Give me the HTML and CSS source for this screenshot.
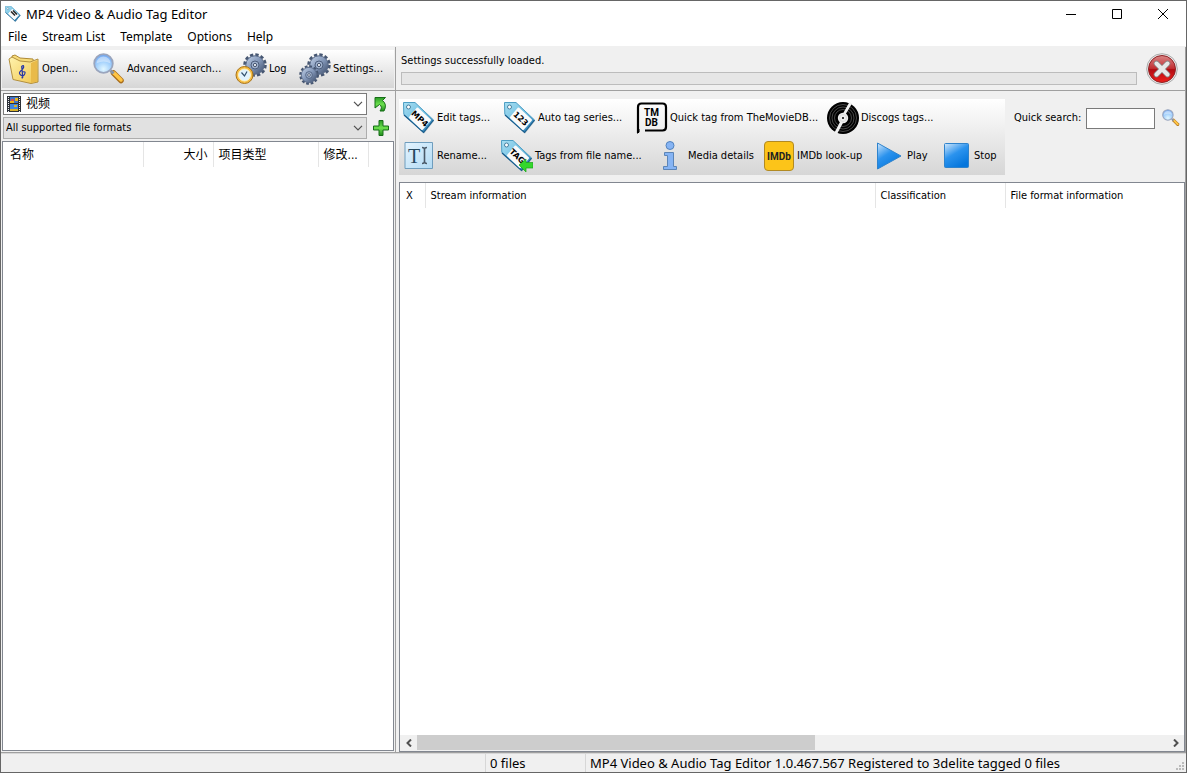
FILE: index.html
```html
<!DOCTYPE html>
<html lang="en">
<head>
<meta charset="utf-8">
<title>MP4 Video &amp; Audio Tag Editor</title>
<link rel="stylesheet" href="styles.css">
</head>
<body>
<svg class="defs" aria-hidden="true">
  <defs>
    <linearGradient id="tagBlue" x1="0" y1="0" x2="1" y2="1"><stop offset="0" stop-color="#a9dff2"/><stop offset=".5" stop-color="#6fbfe2"/><stop offset="1" stop-color="#1d6ea8"/></linearGradient>
    <linearGradient id="folder" x1="0" y1="0" x2="1" y2="1"><stop offset="0" stop-color="#fff3ae"/><stop offset="1" stop-color="#f0c650"/></linearGradient>
    <radialGradient id="lens" cx=".5" cy=".8" r=".8"><stop offset="0" stop-color="#e2f7ff"/><stop offset=".5" stop-color="#a5d2fc"/><stop offset="1" stop-color="#6aa2f0"/></radialGradient>
    <linearGradient id="steel" x1="0" y1="0" x2="1" y2="1"><stop offset="0" stop-color="#c3d2e8"/><stop offset=".5" stop-color="#8397b8"/><stop offset="1" stop-color="#3c4c69"/></linearGradient>
    <linearGradient id="green" x1="0" y1="0" x2="0" y2="1"><stop offset="0" stop-color="#2b9c26"/><stop offset=".5" stop-color="#6ce04e"/><stop offset="1" stop-color="#1f8a1c"/></linearGradient>
    <linearGradient id="blue" x1="0" y1="0" x2=".6" y2="1"><stop offset="0" stop-color="#d3e8fb"/><stop offset=".5" stop-color="#2b93ee"/><stop offset="1" stop-color="#0576dc"/></linearGradient>
    <linearGradient id="red" x1="0" y1="0" x2="0" y2="1"><stop offset="0" stop-color="#d98686"/><stop offset=".48" stop-color="#c22f33"/><stop offset=".5" stop-color="#b00d13"/><stop offset="1" stop-color="#f0201c"/></linearGradient>
    <linearGradient id="pale" x1="0" y1="0" x2="1" y2="1"><stop offset="0" stop-color="#e4f4ff"/><stop offset="1" stop-color="#b2daf3"/></linearGradient>
    <symbol id="tag" viewBox="0 0 32 32">
      <path d="M.5 1.500H12L31 19 21 31.500 1.500 13.500Z" fill="#456f86" opacity=".5"/>
      <path d="M.5.5H12L30.500 18 20.500 30.500.8 12.500Z" fill="url(#tagBlue)" stroke="#4d9ec4" stroke-linejoin="round"/>
      <path d="m1 13 19.500 17.500L30.500 18" fill="none" stroke="#1b5c8c" stroke-width="1.200"/>
      <circle cx="5.500" cy="5" r="2" fill="#fff" stroke="#477f9e"/>
      <path d="M14.500 6.500 27 18 19 27 7 15.500Z" fill="#fafafa" stroke="#fafafa" stroke-width="2" stroke-linejoin="round"/>
    </symbol>
    <symbol id="glass" viewBox="0 0 32 32">
      <path d="m20.500 20 7.500 7.500" stroke="#a86d1c" stroke-width="5.500" stroke-linecap="round"/>
      <path d="m21 20 7 7" stroke="#ffc544" stroke-width="3.500" stroke-linecap="round"/>
      <path d="m17.500 17.500 3 3" stroke="#8893a5" stroke-width="3"/>
      <circle cx="10.500" cy="10.500" r="9.300" fill="url(#lens)" stroke="#9aa5bd" stroke-width="1.800"/>
      <path d="M3.500 10.500a7 7 0 0 1 14 0q-7-4-14 0Z" fill="#fff" opacity=".4"/>
    </symbol>
    <symbol id="gear" viewBox="0 0 24 24">
      <circle cx="12" cy="12" r="10" fill="none" stroke="#475772" stroke-width="3.500" stroke-dasharray="3.200 2.036"/>
      <circle cx="12" cy="12" r="9.200" fill="url(#steel)" stroke="#5a6b89"/>
      <circle cx="12" cy="12" r="4" fill="#9eb0cc" stroke="#4d5e7c"/>
      <circle cx="12" cy="12" r="1.600" fill="#f2f5f9" stroke="#45536d"/>
    </symbol>
    <symbol id="chevron" viewBox="0 0 10 6"><path d="m1 .8 4 4 4-4" fill="none" stroke="#505050" stroke-width="1.200"/></symbol>
  </defs>
</svg>

<div class="window">
  <header class="titlebar">
    <svg class="app-icon" viewBox="0 0 32 32"><use href="#tag"/><path d="m12 11 8 8m-4-10 8 8" stroke="#222" stroke-width="3"/></svg>
    <h1 class="title">MP4 Video &amp; Audio Tag Editor</h1>
    <div class="window-buttons">
      <button class="window-button" aria-label="Minimize"><svg viewBox="0 0 12 12"><path d="M1 6.500h10"/></svg></button>
      <button class="window-button" aria-label="Maximize"><svg viewBox="0 0 12 12"><path d="M1.500 1.500h9v9h-9z"/></svg></button>
      <button class="window-button" aria-label="Close"><svg viewBox="0 0 12 12"><path d="m1 1 10 10M11 1 1 11"/></svg></button>
    </div>
  </header>
  <nav class="menubar">
    <button>File</button><button>Stream List</button><button>Template</button><button>Options</button><button>Help</button>
  </nav>

  <main class="panes">
    <section class="left-pane">
      <div class="top-band">
        <div class="toolbar main-toolbar">
          <button class="tool tool-open">
            <svg viewBox="0 0 32 32"><path d="M4 3 7 2l5 3 13 1 1 6-2 14-17-4Z" fill="#f7dc7a" stroke="#b08a35"/><path d="M1 6 4 4l8 4 10 1 8-3v23l-7 1.500-18-4Z" fill="url(#folder)" stroke="#b3903f"/><path d="m23 10 6-2.500v21l-6 1.500Z" fill="#e9ba49"/><path d="M13.500 24.500q1.500 1 1.200-1l-1-10q2-2 2 .5-.5 2-3 4t0 4 4-1-2.500-2" fill="none" stroke="#2434a8" stroke-width="1.200"/></svg>
            Open...
          </button>
          <button class="tool tool-advanced"><svg viewBox="0 0 32 32"><use href="#glass"/></svg>Advanced search...</button>
          <button class="tool tool-log">
            <svg viewBox="0 0 32 32"><use href="#gear" x="8" y="0" width="24" height="24"/><circle cx="9.500" cy="22" r="8.500" fill="#f6bd43" stroke="#a8741b"/><circle cx="9.500" cy="22" r="6" fill="#e1f3fd" stroke="#fff4c4"/><path d="M6.500 19.500 9.500 23l2.500-4.500" fill="none" stroke="#31506c" stroke-width="1.200"/></svg>
            Log
          </button>
          <button class="tool"><svg viewBox="0 0 32 32"><use href="#gear" x="8" y="0" width="24" height="24"/><use href="#gear" x="0" y="12" width="20" height="20"/></svg>Settings...</button>
        </div>
      </div>
      <div class="filters">
        <div class="combo combo-folder">
          <svg class="film" viewBox="0 0 14 16"><path d="M0 0h14v16H0z" fill="#2d3138"/><path d="M3 1h8v6H3z" fill="#3f76c8"/><path d="M3 8h8v7H3z" fill="#3f86df"/><path d="M3 5h4v2H3zm5-3h3v3H8z" fill="#e8b51f"/><path d="M4 3h3v2H4z" fill="#d34d55"/><path d="M3 13h8v2H3zm4-4h3v2H7z" fill="#d8b22b"/><path d="M1.500 1v15M12.500 1v15" stroke="#eee" stroke-dasharray="1 1"/></svg>
          <select aria-label="Folder"><option>视频</option></select>
          <svg class="chevron"><use href="#chevron"/></svg>
        </div>
        <button class="filter-button" aria-label="Up one level"><svg viewBox="0 0 16 16"><path d="M2 1.500h10.500l-3 3q5 4 1.500 10.500H7q3-4-.5-6.500L2 12Z" fill="url(#green)" stroke="#176e18"/></svg></button>
        <div class="combo combo-format">
          <select aria-label="File formats"><option>All supported file formats</option></select>
          <svg class="chevron"><use href="#chevron"/></svg>
        </div>
        <button class="filter-button" aria-label="Add"><svg viewBox="0 0 16 16"><path d="M6 .5h4V6h5.500v4H10v5.500H6V10H.5V6H6Z" fill="url(#green)" stroke="#176e18"/></svg></button>
      </div>
      <div class="file-list">
        <table>
          <colgroup><col class="col-name"><col class="col-size"><col class="col-type"><col class="col-date"><col></colgroup>
          <thead><tr><th>名称</th><th class="numeric">大小</th><th>项目类型</th><th>修改...</th><td></td></tr></thead>
        </table>
      </div>
    </section>

    <section class="right-pane">
      <div class="top-band status-band">
        <div class="progress-area">
          <label for="progress">Settings successfully loaded.</label>
          <progress id="progress" value="0" max="100"></progress>
        </div>
        <button class="cancel" aria-label="Cancel"><svg viewBox="0 0 32 32"><circle cx="16" cy="16" r="15.300" fill="#ececec" stroke="#aaa"/><circle cx="16" cy="16" r="13.500" fill="url(#red)" stroke="#8d2225"/><path d="m10.500 10.500 11 11m0-11-11 11" stroke="#888" stroke-width="5.500" stroke-linecap="round"/><path d="m10.500 10.500 11 11m0-11-11 11" stroke="#e8e8e8" stroke-width="4" stroke-linecap="round"/></svg></button>
      </div>
      <div class="actions">
        <div class="toolbar tag-toolbar">
          <div class="tool-row">
            <button class="tool tool-edit"><svg viewBox="0 0 32 32"><use href="#tag"/><text class="tag-text" transform="translate(17 16.500) rotate(43)" y="3">MP4</text></svg>Edit tags...</button>
            <button class="tool tool-series"><svg viewBox="0 0 32 32"><use href="#tag"/><text class="tag-text" transform="translate(17 16.500) rotate(43)" y="3">123</text></svg>Auto tag series...</button>
            <button class="tool tool-moviedb"><svg viewBox="0 0 32 32"><path d="M2 31V5q0-3.500 3.500-3.500h21Q30 1.500 30 5v20q0 3.500-3.500 3.500H9" fill="none" stroke="#000" stroke-width="2.200"/><path d="M1 32v-5h2.500v2.500Z"/><text class="db-text" x="15.500" y="13.500">TM</text><text class="db-text" x="15.500" y="24">DB</text></svg>Quick tag from TheMovieDB...</button>
            <button class="tool"><svg viewBox="0 0 32 32"><circle cx="16" cy="16" r="16"/><g fill="none" stroke="#777" stroke-width=".6"><circle cx="16" cy="16" r="13.500"/><circle cx="16" cy="16" r="11"/><circle cx="16" cy="16" r="8.500"/></g><path d="m22.500 0 2.500 1.500L18.500 12.500 16 11.500ZM7.500 30.500l2.500 1.500L16.500 20l-3-1Z" fill="#f1f1f1"/><circle cx="16" cy="16" r="5.200" fill="#eee"/><circle cx="16" cy="16" r="3.500" fill="none" stroke="#ccc" stroke-width=".6"/><circle cx="16" cy="16" r="1"/></svg>Discogs tags...</button>
          </div>
          <div class="tool-row">
            <button class="tool tool-rename"><svg viewBox="0 0 32 32"><path d="M2 2.500h27.500v26H2z" fill="url(#pale)" stroke="#6f9dbd"/><text class="rename-text" x="5" y="22.500">T</text><path d="M19 7.500q2.500 0 2.500 2 0-2 2.500-2m-5 16q2.500 0 2.500-2 0 2 2.500 2m-2.500-14v12" fill="none" stroke="#4a5968" stroke-width="1.600"/></svg>Rename...</button>
            <button class="tool tool-file"><svg viewBox="0 0 32 32"><use href="#tag"/><text class="tag-text" transform="translate(16.500 16) rotate(43)" y="3">TAG</text><path d="m18 25 7-6v3.500h7V28h-7v4Z" fill="#34d72b" stroke="#1ba01b" stroke-width=".7"/></svg>Tags from file name...</button>
            <button class="tool tool-media"><svg viewBox="0 0 32 32"><circle cx="16" cy="5.500" r="4" fill="#86b4f4" stroke="#5282bd"/><path d="M10.500 12.500h9v14h3v3h-13v-3h4v-11h-3Z" fill="#86b4f4" stroke="#5c85b7"/></svg>Media details</button>
            <button class="tool tool-imdb"><svg viewBox="0 0 32 32"><rect x="1.500" y="1.500" width="29" height="29" rx="3.500" fill="#fcc419" stroke="#b28a22"/><text class="imdb-text" x="16" y="20">IMDb</text></svg>IMDb look-up</button>
            <button class="tool tool-play"><svg viewBox="0 0 32 32"><path d="M4.500 3v26L28 16Z" fill="url(#blue)" stroke="#2e83cd"/></svg>Play</button>
            <button class="tool"><svg viewBox="0 0 32 32"><rect x="4.500" y="3.500" width="24" height="24" rx="1" fill="url(#blue)" stroke="#2e83cd"/></svg>Stop</button>
          </div>
        </div>
        <form class="search">
          <label for="search">Quick search:</label>
          <input id="search" type="text">
          <button type="button" aria-label="Search"><svg viewBox="0 0 32 32"><use href="#glass"/></svg></button>
        </form>
      </div>
      <div class="stream-list">
        <table>
          <colgroup><col class="col-mark"><col class="col-stream"><col class="col-class"><col></colgroup>
          <thead><tr><th>X</th><th>Stream information</th><th>Classification</th><th>File format information</th></tr></thead>
        </table>
        <div class="scrollbar">
          <button aria-label="Scroll left"><svg viewBox="0 0 8 8"><path d="M6 .5 2.500 4 6 7.500"/></svg></button>
          <div class="track"><div class="thumb"></div></div>
          <button aria-label="Scroll right"><svg viewBox="0 0 8 8"><path d="M2 .5 5.500 4 2 7.500"/></svg></button>
        </div>
      </div>
    </section>
  </main>

  <footer class="statusbar">
    <span class="status-main"></span>
    <span class="status-files">0 files</span>
    <span class="status-version">MP4 Video &amp; Audio Tag Editor 1.0.467.567 Registered to 3delite tagged 0 files</span>
    <svg class="grip" viewBox="0 0 9 9"><path d="M6 0h2v2H6zM3 3h2v2H3zm3 0h2v2H6zM0 6h2v2H0zm3 0h2v2H3zm3 0h2v2H6z" fill="#bbb"/></svg>
  </footer>
</div>
</body>
</html>
```
FILE: styles.css
```css
* { box-sizing: border-box; }
body { margin: 0; color: #000; font: 11px/16px "DejaVu Sans Condensed", "Noto Sans", "Noto Sans CJK SC", sans-serif; }
button { padding: 0; border: 0; background: none; color: inherit; font: inherit; white-space: nowrap; }
svg { display: block; flex: none; }
.defs { position: absolute; width: 0; height: 0; }

.window { display: flex; flex-direction: column; height: 100vh; border: 1px solid #666; background: #f0f0f0; }
.titlebar, .menubar, .statusbar { font-family: "Noto Sans", "Noto Sans CJK SC", sans-serif; }
.titlebar { display: flex; align-items: center; height: 26px; padding-left: 4px; background: #fff; }
.app-icon { width: 16px; height: 16px; }
.title { flex: 1; margin: 0 0 0 5px; font-size: 13px; font-weight: 400; line-height: 20px; }
.window-buttons { display: flex; }
.window-button { display: flex; align-items: center; justify-content: center; width: 46px; height: 24px; }
.window-button svg { width: 12px; height: 12px; fill: none; stroke: #000; }
.menubar { display: flex; gap: 15px; height: 20px; padding-left: 7px; background: #fff; border-bottom: 1px solid #f0f0f0; font-size: 12px; line-height: 20px; }

.panes { display: grid; grid-template-columns: 395px minmax(0, 1fr); flex: 1; min-height: 0; }
.left-pane, .right-pane { display: flex; flex-direction: column; min-width: 0; min-height: 0; border-right: 1px solid #a0a0a0; border-bottom: 1px solid #a0a0a0; }
.top-band { height: 44px; padding: 3px 1px; border-bottom: 1px solid #a0a0a0; }
.toolbar { background: linear-gradient(#fff, #d6d6d6); }
.main-toolbar { display: flex; align-items: center; height: 38px; padding-left: 6px; }
.tool { display: flex; align-items: center; gap: 2px; height: 38px; }
.tool svg { width: 32px; height: 32px; }
.tool-open { width: 85px; }
.tool-advanced { width: 142px; }
.tool-log { width: 64px; }
.tool-edit { width: 101px; }
.tool-series { width: 132px; }
.tool-moviedb { width: 191px; }
.tool-rename { width: 98px; }
.tool-file { width: 153px; }
.tool-media { width: 109px; }
.tool-imdb { width: 110px; }
.tool-play { width: 67px; }

.filters { display: grid; grid-template-columns: 1fr 16px; gap: 2px 6px; align-items: center; padding: 2px 6px 2px 2px; }
.combo { position: relative; display: flex; height: 22px; }
.combo select { flex: 1; appearance: none; padding: 0 20px 0 2px; border: 1px solid #adadad; border-radius: 0; background: #e1e1e1; color: #000; font: inherit; }
.combo-folder select { padding-left: 22px; border-color: #7a7a7a; background: #fff; font-size: 12px; }
.film { position: absolute; left: 4px; top: 3px; width: 14px; height: 16px; }
.chevron { position: absolute; right: 4px; top: 8px; width: 10px; height: 6px; pointer-events: none; }
.filter-button svg { width: 16px; height: 16px; }

.file-list, .stream-list { flex: 1; min-height: 0; border: 1px solid #828790; background: #fff; }
.file-list { margin: 0 1px 1px; }
table { width: 100%; border-collapse: collapse; table-layout: fixed; }
th { height: 25px; padding: 0 5px; border-right: 1px solid #e5e5e5; font-weight: 400; text-align: left; white-space: nowrap; }
th:last-child { border-right: 0; }
.file-list th { font-size: 12px; }
.file-list th:first-child { padding-left: 7px; }
.file-list .numeric { text-align: right; }
.col-name { width: 140px; }
.col-size { width: 70px; }
.col-type { width: 105px; }
.col-date { width: 50px; }
.col-mark { width: 25px; }
.col-stream { width: 450px; }
.col-class { width: 130px; }

.status-band { display: flex; align-items: center; gap: 9px; padding: 3px 7px 2px 5px; }
.progress-area { flex: 1; display: grid; gap: 3px; }
progress { appearance: none; width: 100%; height: 13px; border: 1px solid #bcbcbc; background: #e6e6e6; }
progress::-webkit-progress-bar { background: #e6e6e6; }
.cancel svg { width: 32px; height: 32px; }
.actions { display: flex; align-items: flex-start; gap: 9px; padding: 8px 5px 7px 3px; }
.tag-toolbar { flex: none; width: 606px; padding-left: 4px; }
.tool-row { display: flex; }
.search { display: flex; flex: 1; min-width: 0; align-items: center; gap: 5px; height: 38px; white-space: nowrap; }
.search input { flex: 1; min-width: 0; height: 21px; border: 1px solid #7a7a7a; background: #fff; font: inherit; }
.search button { margin-left: 2px; }
.search svg { width: 18px; height: 18px; }
.stream-list { display: flex; flex-direction: column; justify-content: space-between; margin-left: 3px; }
.stream-list th:first-child { padding-left: 6px; }
.scrollbar { display: grid; grid-template-columns: 17px 1fr 17px; height: 16px; background: #f0f0f0; }
.scrollbar button { display: flex; align-items: center; justify-content: center; }
.scrollbar svg { width: 8px; height: 8px; fill: none; stroke: #505050; stroke-width: 2; }
.thumb { width: 53%; height: 15px; background: #cdcdcd; }

.statusbar { display: flex; height: 19px; border-top: 1px solid #d7d7d7; font-size: 13px; line-height: 19px; }
.status-main { width: 485px; border-right: 1px solid #d7d7d7; }
.status-files { width: 100px; padding-left: 4px; border-right: 1px solid #d7d7d7; }
.status-version { flex: 1; padding-left: 4px; }
.grip { align-self: flex-end; width: 9px; height: 9px; margin: 1px; }

.tag-text { font: bold 8px "DejaVu Sans", sans-serif; text-anchor: middle; }
.db-text { font: bold 10px "Roboto", sans-serif; text-anchor: middle; }
.rename-text { font: 20px "Liberation Serif", serif; fill: #26485f; }
.imdb-text { font: bold 10px "Roboto", sans-serif; text-anchor: middle; fill: #222; }
```
